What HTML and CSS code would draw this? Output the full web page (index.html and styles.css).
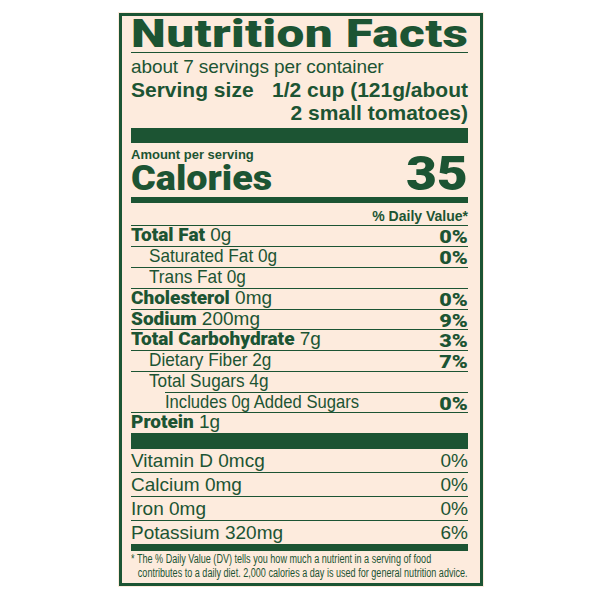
FILE: index.html
```html
<!DOCTYPE html>
<html>
<head>
<meta charset="utf-8">
<link rel="stylesheet" href="styles.css">
</head>
<body>
<div class="label">
  <div class="panel">
    <h1 class="title"><span class="title-text">Nutrition Facts</span></h1>
    <div class="servings">about 7 servings per container</div>
    <div class="serving-size">
      <span class="ss-label">Serving size</span>
      <span class="ss-value">1/2 cup (121g/about<br>2 small tomatoes)</span>
    </div>
    <div class="bar bar-thick"></div>
    <div class="amount">Amount per serving</div>
    <div class="calories"><span class="cal-label">Calories</span><span class="cal-value">35</span></div>
    <div class="bar bar-medium"></div>
    <div class="dv-head">% Daily Value*</div>
    <div class="row"><span class="name"><b class="key">Total Fat</b> 0g</span><b class="pct">0%</b></div>
    <div class="row indent1"><span class="name sub">Saturated Fat 0g</span><b class="pct">0%</b></div>
    <div class="row indent1"><span class="name sub">Trans Fat 0g</span></div>
    <div class="row"><span class="name"><b class="key">Cholesterol</b> 0mg</span><b class="pct">0%</b></div>
    <div class="row tight"><span class="name"><b class="key">Sodium</b> 200mg</span><b class="pct">9%</b></div>
    <div class="row"><span class="name"><b class="key">Total Carbohydrate</b> 7g</span><b class="pct">3%</b></div>
    <div class="row indent1"><span class="name sub">Dietary Fiber 2g</span><b class="pct">7%</b></div>
    <div class="row indent1 sugars"><span class="name sub">Total Sugars 4g</span></div>
    <div class="row indent2 tight"><span class="name sub narrow">Includes 0g Added Sugars</span><b class="pct">0%</b></div>
    <div class="row last"><span class="name"><b class="key">Protein</b> 1g</span></div>
    <div class="bar bar-thick2"></div>
    <div class="vrow"><span>Vitamin D 0mcg</span><span>0%</span></div>
    <div class="vrow"><span>Calcium 0mg</span><span>0%</span></div>
    <div class="vrow"><span>Iron 0mg</span><span>0%</span></div>
    <div class="vrow last"><span>Potassium 320mg</span><span>6%</span></div>
    <div class="bar bar-medium2"></div>
    <div class="foot">
      <span class="foot-line">* The % Daily Value (DV) tells you how much a nutrient in a serving of food</span>
      <span class="foot-line foot-line2">contributes to a daily diet. 2,000 calories a day is used for general nutrition advice.</span>
    </div>
  </div>
</div>
</body>
</html>
```
FILE: styles.css
```css
* { box-sizing: border-box; margin: 0; padding: 0; }
html, body { background: #ffffff; }
body {
  padding: 12px 0 0 118px;
  font-family: "Liberation Sans", Arial, sans-serif;
  color: #1c5433;
}
.label {
  width: 366px;
  height: 575px;
  background: #fdebdd;
  padding: 1px;
}
.panel {
  height: 100%;
  border: 3px solid #1c5433;
  padding: 0 12px 0 9px;
}
.title {
  height: 37px;
  border-bottom: 1px solid #1c5433;
  font-family: Roboto, "Liberation Sans", sans-serif;
  font-weight: 900;
  font-size: 39px;
  line-height: 36px;
  white-space: nowrap;
  letter-spacing: 0.3px;
}
.title-text {
  display: inline-block;
  transform: scaleX(1.27);
  transform-origin: left center;
}
.servings {
  padding-top: 3px;
  line-height: 22px;
  font-size: 19px;
  white-space: nowrap;
  letter-spacing: -0.1px;
}
.serving-size {
  display: flex;
  justify-content: space-between;
  font-weight: 700;
  font-size: 21px;
  line-height: 23px;
  white-space: nowrap;
}
.ss-value { text-align: right; }
.bar { background: #1c5433; }
.bar-thick { height: 15px; margin-top: 4px; }
.bar-thick2 { height: 16px; }
.bar-medium { height: 6px; }
.bar-medium2 { height: 7px; }
.amount {
  padding-top: 4px;
  font-weight: 700;
  font-size: 13px;
  line-height: 16px;
}
.calories {
  height: 34px;
  display: flex;
  justify-content: space-between;
  align-items: baseline;
  font-family: Roboto, "Liberation Sans", sans-serif;
  font-weight: 900;
}
.cal-label {
  display: inline-block;
  font-size: 35px;
  line-height: 30px;
  transform: scaleX(1.08);
  transform-origin: left center;
}
.cal-value {
  display: inline-block;
  font-size: 49px;
  line-height: 22px;
  transform: scaleX(1.09);
  transform-origin: right center;
}
.dv-head {
  padding-top: 4px;
  height: 23px;
  border-bottom: 1px solid #1c5433;
  text-align: right;
  font-weight: 700;
  font-size: 14px;
  line-height: 19px;
}
.row {
  height: 21px;
  border-bottom: 1px solid #1c5433;
  display: flex;
  justify-content: space-between;
  align-items: flex-start;
  font-size: 19px;
  line-height: 18px;
  white-space: nowrap;
}
.row.tight { height: 20px; }
.row.last { border-bottom: 0; height: 20px; }
.row.indent1 { padding-left: 18px; }
.row.indent2 { padding-left: 34px; }
.sub {
  display: inline-block;
  transform: scaleX(0.905);
  transform-origin: left center;
}
.sub.narrow { transform: scaleX(0.875); }
.row.sugars {
  border-bottom: 0;
  background: linear-gradient(#1c5433, #1c5433) no-repeat 34px 100% / calc(100% - 34px) 1px;
}
.key {
  font-family: Roboto, "Liberation Sans", sans-serif;
  font-weight: 900;
}
.pct {
  display: inline-block;
  margin-top: 2px;
  font-family: Roboto, "Liberation Sans", sans-serif;
  font-weight: 900;
  font-size: 18px;
  line-height: 18px;
  transform: scaleX(1.2);
  transform-origin: right center;
}
.vrow {
  height: 24px;
  padding-top: 1px;
  border-bottom: 1px solid #1c5433;
  display: flex;
  justify-content: space-between;
  font-size: 19px;
  line-height: 22px;
}
.vrow.last { border-bottom: 0; height: 23px; }
.foot {
  padding-top: 1px;
  font-size: 12px;
  line-height: 14px;
  white-space: nowrap;
}
.foot-line {
  display: block;
  transform: scaleX(0.756);
  transform-origin: left center;
}
.foot-line2 { padding-left: 9px; }
```
